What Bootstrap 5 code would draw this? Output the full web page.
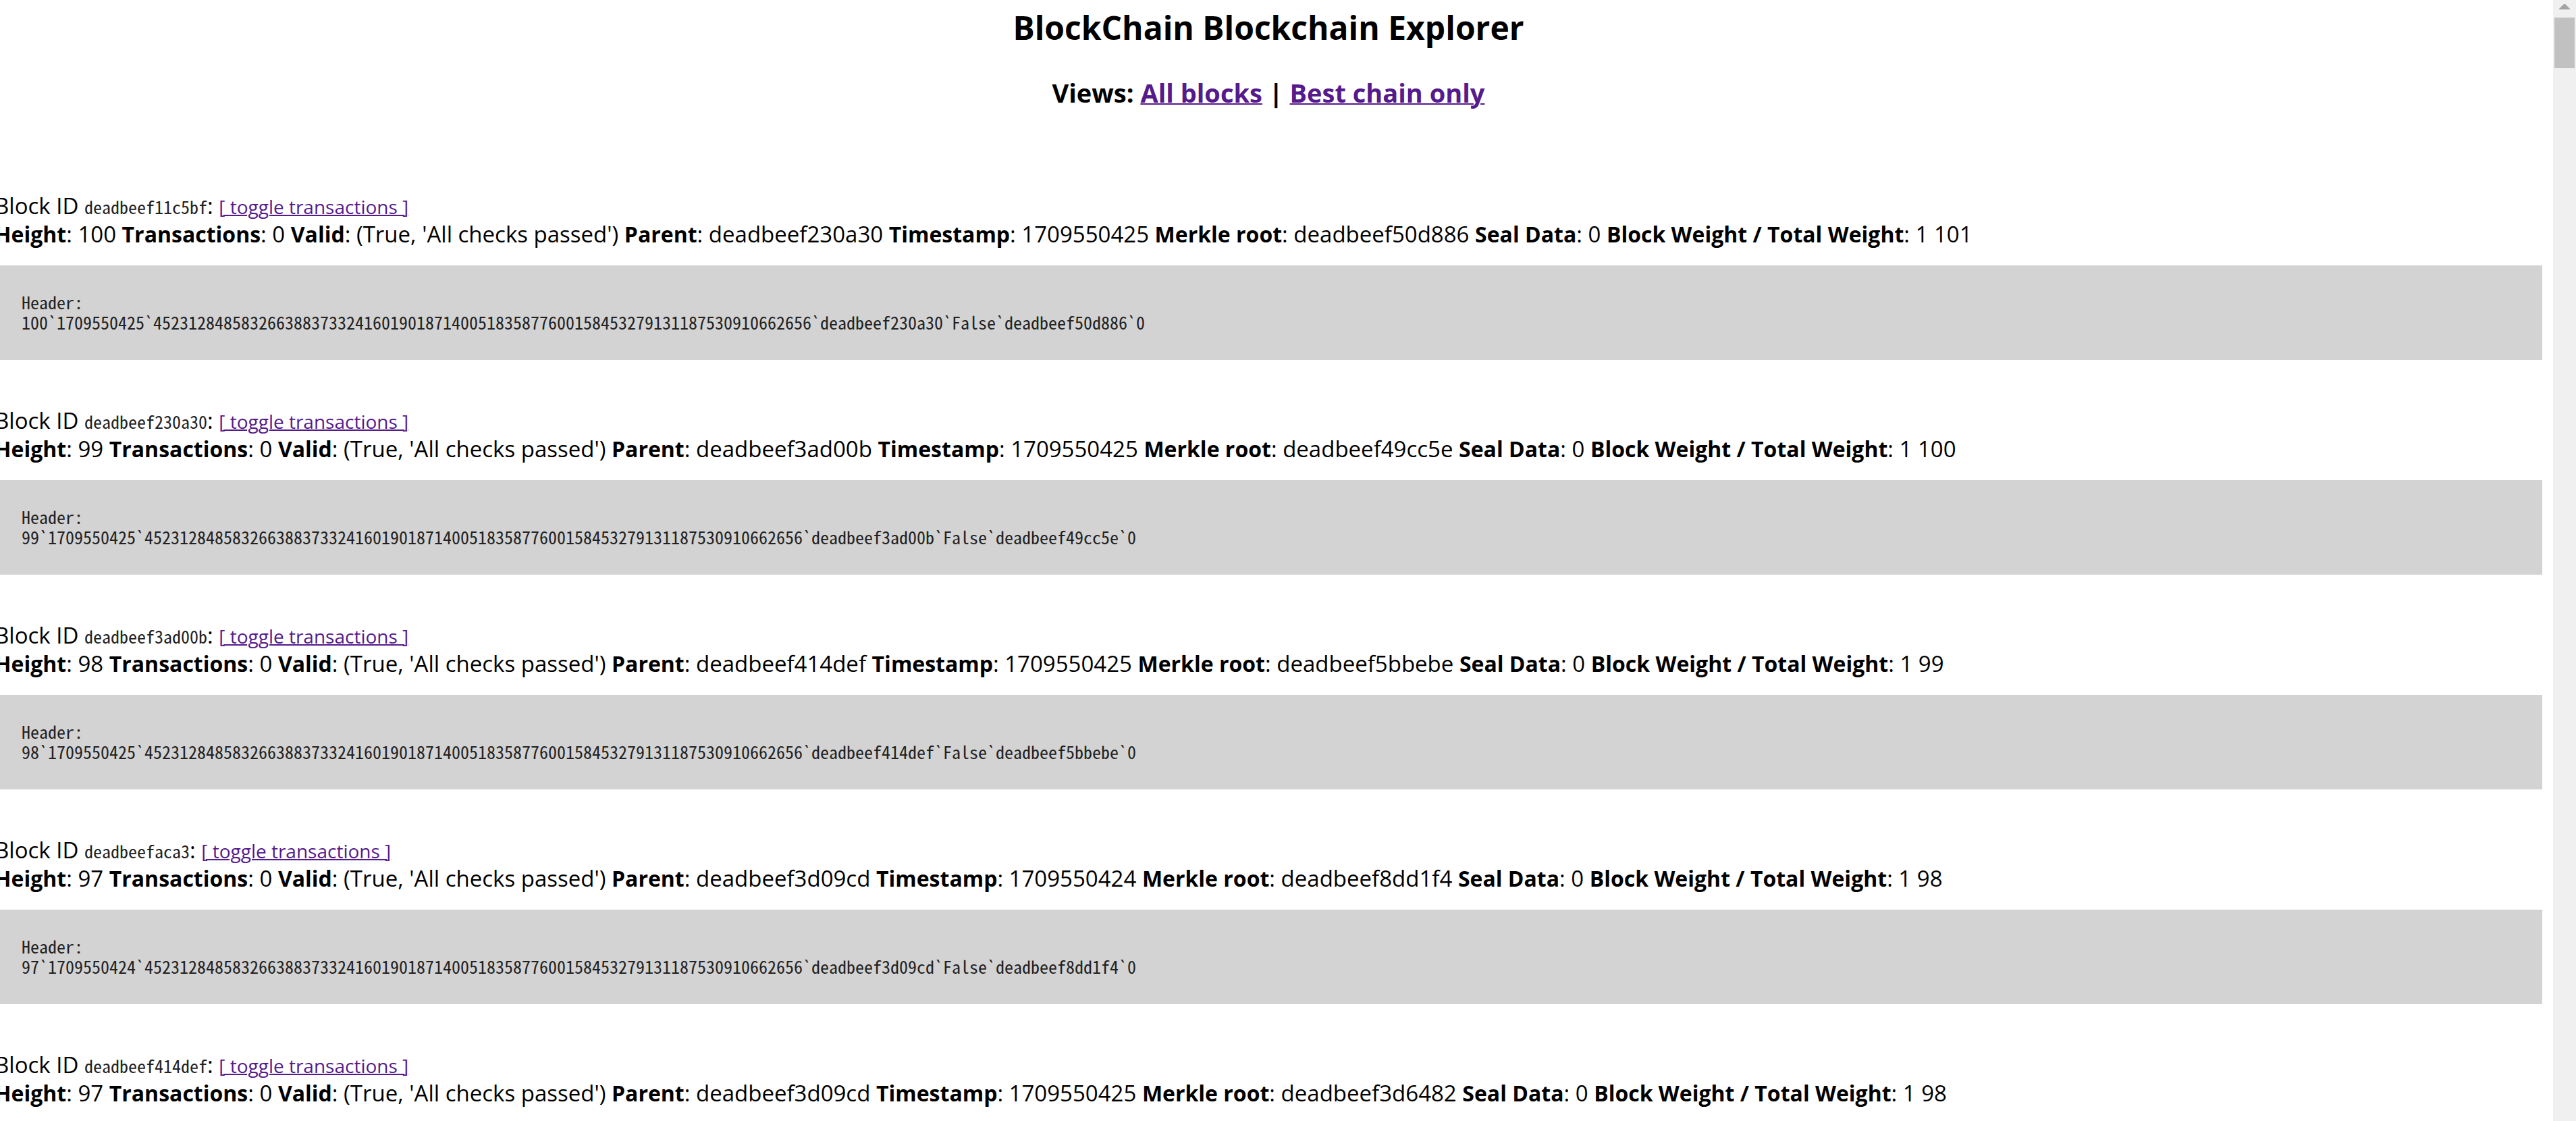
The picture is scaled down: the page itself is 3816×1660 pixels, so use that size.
<!DOCTYPE html>
<html lang="en">
<head>
<meta charset="utf-8">
<meta name="viewport" content="width=device-width, initial-scale=1">
<title>BlockChain Blockchain Explorer</title>
<link href="https://cdn.jsdelivr.net/npm/bootstrap@5.3.0/dist/css/bootstrap.min.css" rel="stylesheet">
<style>
  body { font-family: "Open Sans", "Noto Sans", sans-serif; font-size: 33px; line-height: 42px; color: #000; background: #fff; }
  a { color: #551a8b; text-decoration-thickness: 2px; }
  b { font-size: 32px; line-height: 1; }
  .explorer { margin-left: -8px; padding-right: 16px; }
  .site-title { font-size: 48px; line-height: 64px; padding-top: 9px; margin-bottom: 39px; }
  .views { font-size: 38px; line-height: 50px; margin-bottom: 122px; }
  .block-entry { margin-bottom: 69px; }
  .hash, .raw-header { font-family: "Noto Sans Mono CJK SC", "Liberation Mono", monospace; font-size: 26px; }
  .hash { color: #222; line-height: 1; }
  .toggle { font-size: 28px; line-height: 1; }
  .raw-header { background: #d3d3d3; color: #222; padding: 39px 40px 41px; line-height: 30px; margin: 25px 0 0; }
  .scroll-track { width: 34px; background: #f0f0f0; padding: 6px 2px 0; }
  .scroll-thumb { height: 75px; background: #c1c1c1; margin-top: 12px; }
</style>
<script src="https://cdn.jsdelivr.net/npm/bootstrap@5.3.0/dist/js/bootstrap.bundle.min.js"></script>
</head>
<body class="d-flex vh-100 overflow-hidden">
<main class="explorer flex-grow-1">
  <header class="text-center">
    <h1 class="site-title fw-bold">BlockChain Blockchain Explorer</h1>
    <h2 class="views fw-bold">Views: <a href="#all">All blocks</a> | <a href="#best">Best chain only</a></h2>
  </header>

  <article class="block-entry">
    <div>Block ID <span class="hash">deadbeef11c5bf</span>: <a class="toggle" href="#tx-100">[ toggle transactions ]</a></div>
    <div><b>Height</b>: 100 <b>Transactions</b>: 0 <b>Valid</b>: (True, 'All checks passed') <b>Parent</b>: deadbeef230a30 <b>Timestamp</b>: 1709550425 <b>Merkle root</b>: deadbeef50d886 <b>Seal Data</b>: 0 <b>Block Weight / Total Weight</b>: 1 101</div>
    <pre class="raw-header">Header:
100`1709550425`452312848583266388373324160190187140051835877600158453279131187530910662656`deadbeef230a30`False`deadbeef50d886`0</pre>
  </article>

  <article class="block-entry">
    <div>Block ID <span class="hash">deadbeef230a30</span>: <a class="toggle" href="#tx-99">[ toggle transactions ]</a></div>
    <div><b>Height</b>: 99 <b>Transactions</b>: 0 <b>Valid</b>: (True, 'All checks passed') <b>Parent</b>: deadbeef3ad00b <b>Timestamp</b>: 1709550425 <b>Merkle root</b>: deadbeef49cc5e <b>Seal Data</b>: 0 <b>Block Weight / Total Weight</b>: 1 100</div>
    <pre class="raw-header">Header:
99`1709550425`452312848583266388373324160190187140051835877600158453279131187530910662656`deadbeef3ad00b`False`deadbeef49cc5e`0</pre>
  </article>

  <article class="block-entry">
    <div>Block ID <span class="hash">deadbeef3ad00b</span>: <a class="toggle" href="#tx-98">[ toggle transactions ]</a></div>
    <div><b>Height</b>: 98 <b>Transactions</b>: 0 <b>Valid</b>: (True, 'All checks passed') <b>Parent</b>: deadbeef414def <b>Timestamp</b>: 1709550425 <b>Merkle root</b>: deadbeef5bbebe <b>Seal Data</b>: 0 <b>Block Weight / Total Weight</b>: 1 99</div>
    <pre class="raw-header">Header:
98`1709550425`452312848583266388373324160190187140051835877600158453279131187530910662656`deadbeef414def`False`deadbeef5bbebe`0</pre>
  </article>

  <article class="block-entry">
    <div>Block ID <span class="hash">deadbeefaca3</span>: <a class="toggle" href="#tx-97a">[ toggle transactions ]</a></div>
    <div><b>Height</b>: 97 <b>Transactions</b>: 0 <b>Valid</b>: (True, 'All checks passed') <b>Parent</b>: deadbeef3d09cd <b>Timestamp</b>: 1709550424 <b>Merkle root</b>: deadbeef8dd1f4 <b>Seal Data</b>: 0 <b>Block Weight / Total Weight</b>: 1 98</div>
    <pre class="raw-header">Header:
97`1709550424`452312848583266388373324160190187140051835877600158453279131187530910662656`deadbeef3d09cd`False`deadbeef8dd1f4`0</pre>
  </article>

  <article>
    <div>Block ID <span class="hash">deadbeef414def</span>: <a class="toggle" href="#tx-97b">[ toggle transactions ]</a></div>
    <div><b>Height</b>: 97 <b>Transactions</b>: 0 <b>Valid</b>: (True, 'All checks passed') <b>Parent</b>: deadbeef3d09cd <b>Timestamp</b>: 1709550425 <b>Merkle root</b>: deadbeef3d6482 <b>Seal Data</b>: 0 <b>Block Weight / Total Weight</b>: 1 98</div>
  </article>
</main>
<div class="scroll-track flex-shrink-0" aria-hidden="true">
  <svg class="d-block mx-auto" width="16" height="8" viewBox="0 0 16 8"><path d="M7 0h2l7 7v1H0V7z" fill="#a3a3a3"/></svg>
  <div class="scroll-thumb"></div>
</div>
</body>
</html>
